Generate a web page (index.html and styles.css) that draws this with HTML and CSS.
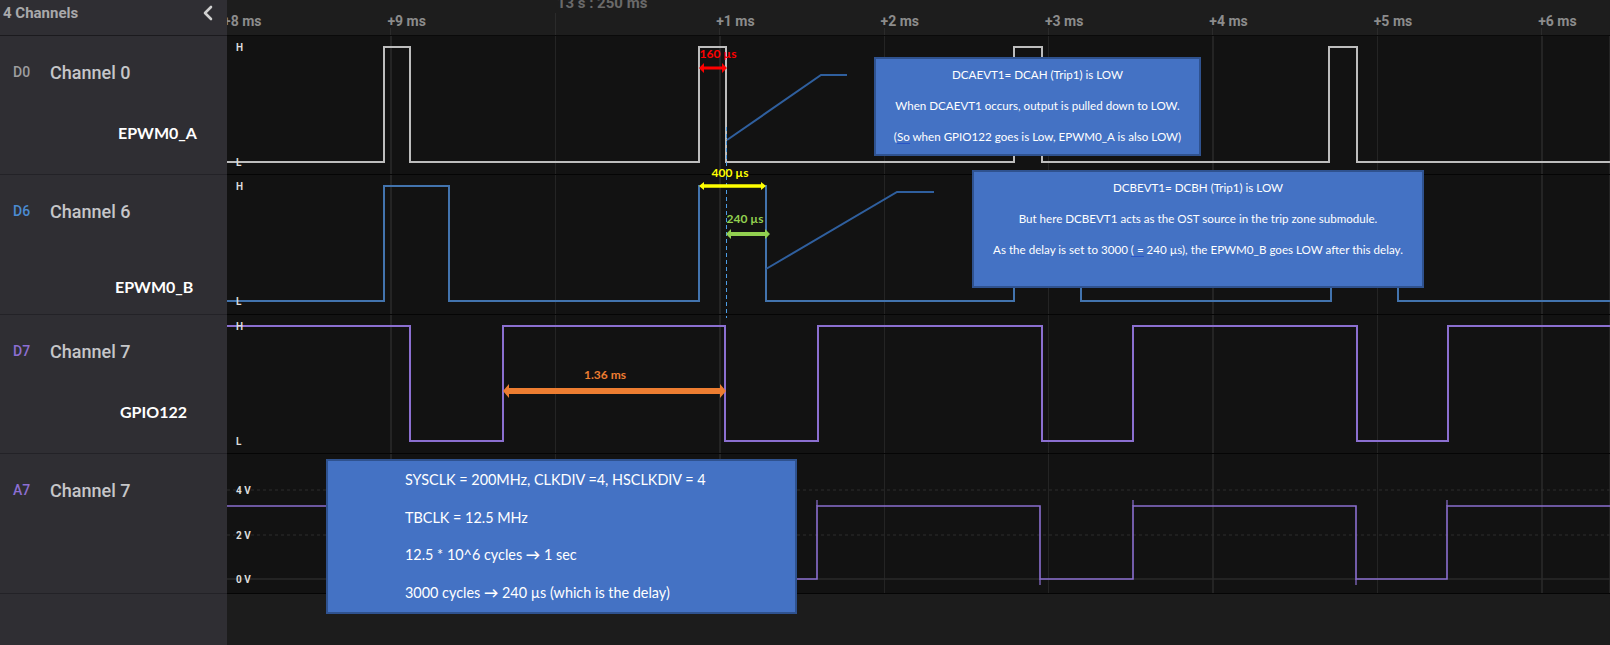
FILE: index.html
```html
<!DOCTYPE html>
<html lang="en">
<head>
<meta charset="utf-8">
<title>Logic analyzer capture</title>
<link rel="stylesheet" href="styles.css">
</head>
<body>
<div class="screen">
  <!-- header row -->
  <div class="side-head">
    <span class="side-title">4 Channels</span>
    <svg class="chev" width="12" height="16" viewBox="0 0 12 16"><polyline points="9,2 3,8 9,14" fill="none" stroke="#d0d0d0" stroke-width="2.6" stroke-linecap="round" stroke-linejoin="round"/></svg>
  </div>
  <div class="axis">
    <div class="axis-track">
      <div class="tick"><span class="tick-label">+8 ms</span></div>
      <div class="tick"><span class="tick-label">+9 ms</span></div>
      <div class="tick tick--center"><span class="tick-label">13 s : 250 ms</span></div>
      <div class="tick"><span class="tick-label">+1 ms</span></div>
      <div class="tick"><span class="tick-label">+2 ms</span></div>
      <div class="tick"><span class="tick-label">+3 ms</span></div>
      <div class="tick"><span class="tick-label">+4 ms</span></div>
      <div class="tick"><span class="tick-label">+5 ms</span></div>
      <div class="tick"><span class="tick-label">+6 ms</span></div>
    </div>
  </div>

  <!-- channel D0 -->
  <div class="side-row">
    <div class="ch-line"><span class="ch-id ch-id--gray">D0</span><span class="ch-name">Channel 0</span></div>
    <div class="note note--a">EPWM0_A</div>
  </div>
  <div class="plot">
    <svg width="1383" height="138" viewBox="0 0 1383 138">
      <path d="M0 126 H157 V11 H183 V126 H472 V11 H499 V126 H787 V11 H815 V126 H1102 V11 H1130 V126 H1383" fill="none" stroke="#bdbdbd" stroke-width="2"/>
      <text class="lvl" x="9" y="15">H</text>
      <text class="lvl" x="9" y="130">L</text>
    </svg>
  </div>

  <!-- channel D6 -->
  <div class="side-row">
    <div class="ch-line"><span class="ch-id ch-id--blue">D6</span><span class="ch-name">Channel 6</span></div>
    <div class="note note--b">EPWM0_B</div>
  </div>
  <div class="plot">
    <svg width="1383" height="139" viewBox="0 0 1383 139">
      <path d="M0 126 H157 V11 H222 V126 H472 V11 H539 V126 H787 V11 H854 V126 H1104 V11 H1171 V126 H1383" fill="none" stroke="#4273ad" stroke-width="2"/>
      <text class="lvl" x="9" y="15">H</text>
      <text class="lvl" x="9" y="130">L</text>
    </svg>
  </div>

  <!-- channel D7 -->
  <div class="side-row">
    <div class="ch-line"><span class="ch-id ch-id--purple">D7</span><span class="ch-name">Channel 7</span></div>
    <div class="note note--c">GPIO122</div>
  </div>
  <div class="plot">
    <svg width="1383" height="138" viewBox="0 0 1383 138">
      <path d="M0 11 H183 V126 H276 V11 H498 V126 H591 V11 H815 V126 H906 V11 H1130 V126 H1221 V11 H1383" fill="none" stroke="#8b6fd0" stroke-width="2"/>
      <text class="lvl" x="9" y="15">H</text>
      <text class="lvl" x="9" y="130">L</text>
    </svg>
  </div>

  <!-- channel A7 -->
  <div class="side-row">
    <div class="ch-line"><span class="ch-id ch-id--purple">A7</span><span class="ch-name">Channel 7</span></div>
  </div>
  <div class="plot">
    <svg width="1383" height="139" viewBox="0 0 1383 139">
      <line x1="0" y1="36" x2="1383" y2="36" stroke="#2c2c2c" stroke-width="1" stroke-dasharray="3 3"/>
      <line x1="0" y1="81" x2="1383" y2="81" stroke="#2c2c2c" stroke-width="1" stroke-dasharray="3 3"/>
      <line x1="0" y1="125" x2="1383" y2="125" stroke="#2a2a2a" stroke-width="1.5"/>
      <path d="M0 52 H498 V125 H590 V52 H813 V125 H906 V52 H1129 V125 H1220 V52 H1383" fill="none" stroke="#8b6fd0" stroke-width="1.6"/>
      <path d="M590 52 V46 M813 125 V131 M906 52 V46 M1129 125 V131 M1220 52 V46" fill="none" stroke="#8b6fd0" stroke-width="1.2"/>
      <text class="lvl" x="9" y="40">4 V</text>
      <text class="lvl" x="9" y="85">2 V</text>
      <text class="lvl" x="9" y="129">0 V</text>
    </svg>
  </div>

  <!-- filler -->
  <div class="side-fill"></div>
  <div class="plot-fill"></div>

  <!-- annotation overlay -->
  <div class="overlay">
    <svg class="marks" width="1610" height="645" viewBox="0 0 1610 645">
      <line x1="726.5" y1="127" x2="726.5" y2="318" stroke="#4d9de6" stroke-width="1" stroke-dasharray="4 3"/>
      <polyline points="727,140 821,75 847,75" fill="none" stroke="#2f5f9e" stroke-width="2"/>
      <polyline points="766,269 897,192 934,192" fill="none" stroke="#2f5f9e" stroke-width="2"/>
      <polygon points="699,68 704,63 704,66.5 722,66.5 722,63 727,68 722,73 722,69.5 704,69.5 704,73" fill="#ff0000"/>
      <polygon points="699,186 704,182 704,184.3 761,184.3 761,182 766,186 761,190 761,187.7 704,187.7 704,190" fill="#ffff00"/>
      <polygon points="726,234 731,229 731,232 765,232 765,229 770,234 765,239 765,236 731,236 731,239" fill="#92d050"/>
      <polygon points="503,391 509,384 509,388 720,388 720,384 726,391 720,398 720,394 509,394 509,398" fill="#ed7d31"/>
      <text class="mtext" x="718" y="58" fill="#ff0000">160 µs</text>
      <text class="mtext" x="730" y="177" fill="#ffff00">400 µs</text>
      <text class="mtext" x="745" y="223" fill="#92d050">240 µs</text>
      <text class="mtext" x="605" y="379" fill="#ed7d31">1.36 ms</text>
    </svg>
    <div class="callout callout--a">
      <p>DCAEVT1= DCAH (Trip1) is LOW</p>
      <p>When DCAEVT1 occurs, output is pulled down to LOW.</p>
      <p>(<span class="squiggle">So</span> when GPIO122 goes is Low, EPWM0_A is also LOW)</p>
    </div>
    <div class="callout callout--b">
      <p>DCBEVT1= DCBH (Trip1) is LOW</p>
      <p>But here DCBEVT1 acts as the OST source in the trip zone submodule.</p>
      <p>As the delay is set to 3000 <span class="squiggle">( =</span> 240 µs), the EPWM0_B goes LOW after this delay.</p>
    </div>
    <div class="callout callout--c">
      <p>SYSCLK = 200MHz, CLKDIV =4, HSCLKDIV = 4</p>
      <p>TBCLK = 12.5 MHz</p>
      <p>12.5 * 10^6 cycles <b class="arrow">→</b> 1 sec</p>
      <p>3000 cycles <b class="arrow">→</b> 240 µs (which is the delay)</p>
    </div>
  </div>
</div>
</body>
</html>
```

FILE: styles.css
```css
* { box-sizing: border-box; }

html, body {
  margin: 0;
  padding: 0;
  background: #1d1d1d;
}

.screen {
  position: relative;
  width: 1610px;
  height: 645px;
  overflow: hidden;
  display: grid;
  grid-template-columns: 227px 1383px;
  grid-template-rows: 36px 139px 140px 139px 140px 1fr;
  font-family: Roboto, "Liberation Sans", sans-serif;
}

/* ---------- header ---------- */
.side-head {
  background: #2f2e33;
  border-bottom: 1px solid #1b1a1e;
  display: flex;
  justify-content: space-between;
  align-items: flex-start;
  padding: 4px 13px 0 3px;
}

.side-title {
  font-size: 15px;
  line-height: 18px;
  font-weight: 700;
  color: #a9a9ab;
}

.chev {
  display: block;
  margin-top: 1px;
}

.axis {
  background: #1d1d1d;
  border-bottom: 1px solid #0a0a0a;
  overflow: hidden;
}

.axis-track {
  display: flex;
  height: 100%;
  margin-left: -1px;
}

.tick {
  flex: 0 0 164.4px;
  height: 100%;
  background: linear-gradient(#2b2b2b, #2b2b2b) no-repeat 0 100% / 1px 7px;
}

.tick-label {
  display: block;
  margin-left: -3px;
  padding-top: 13px;
  font-size: 14px;
  line-height: 16px;
  font-weight: 700;
  color: #8c8c8c;
  white-space: nowrap;
}

.tick--center {
  background-size: 1px 22px;
}

.tick--center .tick-label {
  padding-top: 0;
  margin-top: -5px;
  margin-left: 2px;
  font-size: 15px;
  color: #6a6a6a;
}

/* ---------- sidebar rows ---------- */
.side-row {
  background: #2f2e33;
  border-bottom: 1px solid #232227;
  padding-top: 24px;
}

.ch-line {
  display: flex;
  align-items: center;
  height: 24px;
  padding-left: 13px;
}

.ch-id {
  width: 37px;
  font-size: 14px;
  font-weight: 500;
}

.ch-id--gray { color: #9d9d9f; }
.ch-id--blue { color: #4b8bd2; }
.ch-id--purple { color: #8c6fd2; }

.ch-name {
  font-size: 18px;
  font-weight: 500;
  color: #c6c6c9;
}

.note {
  font-family: Lato, "Open Sans", sans-serif;
  font-weight: 700;
  font-size: 16px;
  line-height: 20px;
  color: #ffffff;
}

.note--a { margin: 39px 0 0 118px; }
.note--b { margin: 54px 0 0 115px; }
.note--c { margin: 39px 0 0 120px; }

/* ---------- plots ---------- */
.plot {
  background-color: #121212;
  background-image: repeating-linear-gradient(to right, #242424 0 1.5px, transparent 1.5px 164.4px);
  background-position: -1px 0;
  border-bottom: 1px solid #050505;
}

.plot svg {
  display: block;
}

.lvl {
  font-family: Roboto, "Liberation Sans", sans-serif;
  font-size: 10px;
  font-weight: 700;
  fill: #dcdcdc;
}

.side-fill {
  background: #2f2e33;
}

.plot-fill {
  background: #1c1c1c;
}

/* ---------- overlay annotations ---------- */
.overlay {
  position: absolute;
  inset: 0;
  pointer-events: none;
}

.marks {
  position: absolute;
  left: 0;
  top: 0;
}

.mtext {
  font-family: Lato, "Open Sans", sans-serif;
  font-size: 12px;
  font-weight: 700;
  text-anchor: middle;
}

.callout {
  position: absolute;
  background: #4472c4;
  border: 2px solid #2f528f;
  color: #ffffff;
  font-family: Lato, "Open Sans", sans-serif;
}

.callout p {
  margin: 0;
  white-space: nowrap;
}

.callout--a {
  left: 874px;
  top: 57px;
  width: 327px;
  height: 99px;
  text-align: center;
  font-size: 11.6px;
  line-height: 31px;
}

.callout--b {
  left: 972px;
  top: 170px;
  width: 452px;
  height: 118px;
  text-align: center;
  font-size: 11.6px;
  line-height: 31px;
}

.callout--c {
  left: 326px;
  top: 459px;
  width: 471px;
  height: 155px;
  padding-left: 77px;
  font-size: 14.4px;
  line-height: 37.6px;
}

.squiggle {
  border-bottom: 1px solid #2a55c8;
}

.arrow {
  font-weight: 700;
}
```
